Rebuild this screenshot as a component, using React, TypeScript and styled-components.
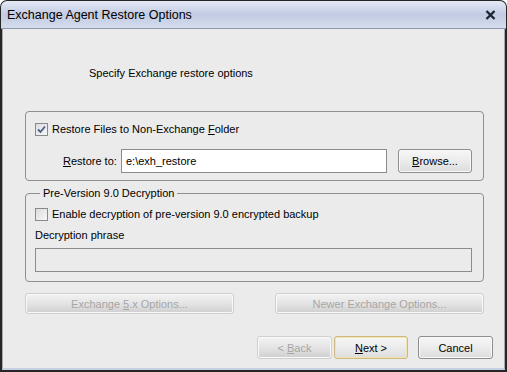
import React, { FC } from "react";
import styled, { createGlobalStyle } from "styled-components";

const GlobalStyle = createGlobalStyle`
  body {
    margin: 0;
    font-family: "Liberation Sans", Arial, sans-serif;
    font-size: 11px;
    color: #000;
  }
`;

const Window = styled.div`
  width: 507px;
  height: 372px;
  box-sizing: border-box;
  display: flex;
  flex-direction: column;
  background: #262626;
  border-radius: 7px 7px 0 0;
  overflow: hidden;
`;

const TitleBar = styled.div`
  height: 28px;
  box-sizing: border-box;
  margin: 1px 1px 0;
  border-radius: 6px 6px 0 0;
  background: linear-gradient(#e4e9f4 0%, #cfd7ea 30%, #c2cbe2 50%, #cbd3e7 75%, #d5dcee 100%);
  border-bottom: 1px solid #8e98b1;
  display: flex;
  align-items: center;
  justify-content: space-between;
  padding: 0 10px 0 6px;
  font-size: 12.5px;
`;

const Body = styled.div`
  flex: 1;
  margin: 0 2px 2px;
  background: #ebebeb;
  border-left: 1px solid #a9a9a9;
  border-right: 1px solid #a9a9a9;
  border-bottom: 2px solid #c7cfe2;
  display: flex;
  flex-direction: column;
  padding: 38px 20px 0 22px;
`;

const Heading = styled.div`
  line-height: 13px;
  padding-left: 64px;
`;

const Group = styled.div`
  margin-top: 31px;
  height: 70px;
  box-sizing: border-box;
  border: 1px solid #8f8f8f;
  border-radius: 4px;
  padding: 11px 11px 0 9px;
  display: flex;
  flex-direction: column;
  gap: 13px;
`;

const Fieldset = styled.fieldset`
  margin: 6px 0 0;
  padding: 8px 11px 9px 9px;
  border: 1px solid #8f8f8f;
  border-radius: 4px;
  display: flex;
  flex-direction: column;
  min-width: 0;
`;

const Legend = styled.legend`
  margin-left: 5px;
  padding: 0 3px;
  line-height: 13px;
`;

const CheckRow = styled.label`
  display: flex;
  align-items: center;
  gap: 4px;
  line-height: 13px;
  height: 13px;
`;

const Box = styled.span`
  width: 13px;
  height: 13px;
  box-sizing: border-box;
  border: 1px solid #8a8a8a;
  background: linear-gradient(135deg, #dcdcdc, #f7f7f7);
  display: flex;
  align-items: center;
  justify-content: center;
  flex: none;
`;

const PathRow = styled.div`
  display: flex;
  align-items: center;
  padding-left: 28px;
`;

const FieldLabel = styled.span`
  width: 58px;
  flex: none;
`;

const TextField = styled.div<{ $disabled?: boolean }>`
  height: 24px;
  box-sizing: border-box;
  border: 1px solid #8c8c8c;
  background: ${(p) => (p.$disabled ? "#ebebeb" : "#fff")};
  display: flex;
  align-items: center;
  padding-left: 4px;
  flex: 1;
`;

const Phrase = styled.div`
  margin-top: 8px;
  line-height: 13px;
`;

const PhraseField = styled(TextField)`
  margin-top: 6px;
  flex: none;
`;

const Button = styled.button<{ $w: number; $h?: number; $focus?: boolean; $gap?: number }>`
  width: ${(p) => p.$w}px;
  height: ${(p) => p.$h ?? 23}px;
  margin-left: ${(p) => p.$gap ?? 0}px;
  flex: none;
  box-sizing: border-box;
  padding: 0;
  font-family: "Liberation Sans", Arial, sans-serif;
  font-size: 11px;
  color: #000;
  border: 1px solid ${(p) => (p.$focus ? "#cdb884" : "#8e8e8e")};
  border-radius: 3px;
  background: linear-gradient(#f6f6f6 0%, #ececec 50%, #dcdcdc 100%);
  box-shadow: ${(p) => (p.$focus ? "inset 0 0 0 1px #f5e3ad" : "inset 0 0 0 1px #f9f9f9")};

  &:disabled {
    color: #a6a6a6;
    border-color: #cfcfcf;
    background: linear-gradient(#f3f3f3 0%, #e4e4e4 50%, #cfcfcf 100%);
  }
`;

const OptionsRow = styled.div`
  margin-top: 11px;
  display: flex;
  justify-content: space-between;
`;

const NavRow = styled.div`
  margin-top: 22px;
  margin-right: -9px;
  display: flex;
  justify-content: flex-end;
`;

const U = styled.span`
  text-decoration: underline;
`;

const Check: FC<{ checked?: boolean }> = ({ checked }) => (
  <Box>
    {checked && (
      <svg width="9" height="9" viewBox="0 0 9 9">
        <path d="M1 4.5 L3.5 7 L8 1.5" fill="none" stroke="#4a5f86" strokeWidth="1.8" />
      </svg>
    )}
  </Box>
);

const App: FC = () => {
  return (
    <>
      <GlobalStyle />
      <Window>
        <TitleBar>
          <span>Exchange Agent Restore Options</span>
          <svg width="11" height="10" viewBox="0 0 11 10">
            <path d="M1.5 1 L9.5 9 M9.5 1 L1.5 9" stroke="#1f2430" strokeWidth="2.4" />
          </svg>
        </TitleBar>
        <Body>
          <Heading>Specify Exchange restore options</Heading>
          <Group>
            <CheckRow>
              <Check checked />
              <span>
                Restore Files to Non-Exchange <U>F</U>older
              </span>
            </CheckRow>
            <PathRow>
              <FieldLabel>
                <U>R</U>estore to:
              </FieldLabel>
              <TextField>e:\exh_restore</TextField>
              <Button $w={74} $h={24} $gap={11}>
                <U>B</U>rowse...
              </Button>
            </PathRow>
          </Group>
          <Fieldset>
            <Legend>Pre-Version 9.0 Decryption</Legend>
            <CheckRow>
              <Check />
              <span>Enable decryption of pre-version 9.0 encrypted backup</span>
            </CheckRow>
            <Phrase>Decryption phrase</Phrase>
            <PhraseField $disabled />
          </Fieldset>
          <OptionsRow>
            <Button $w={209} $h={21} disabled>
              Exchange <U>5</U>.x Options...
            </Button>
            <Button $w={209} $h={21} disabled>
              Newer Exchange Options...
            </Button>
          </OptionsRow>
          <NavRow>
            <Button $w={75} disabled>
              &lt; <U>B</U>ack
            </Button>
            <Button $w={74} $focus $gap={2}>
              <U>N</U>ext &gt;
            </Button>
            <Button $w={75} $gap={10}>
              Cancel
            </Button>
          </NavRow>
        </Body>
      </Window>
    </>
  );
};

export default App;
